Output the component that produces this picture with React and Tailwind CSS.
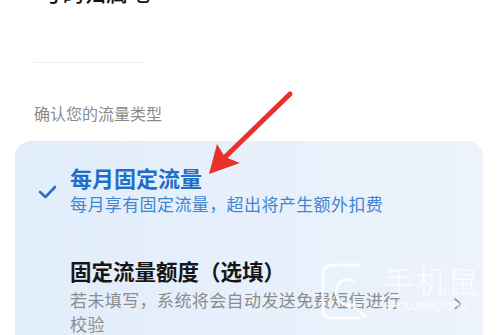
import React from "react";

const CJK = { fontFamily: '"Noto Sans CJK SC", "Noto Sans", sans-serif' };

function Check() {
  return (
    <svg width="19" height="14" viewBox="0 0 19 14" className="shrink-0">
      <path d="M2 7 L7.5 12 L17 2" fill="none" stroke="#2f6fbf" strokeWidth="2.6" strokeLinecap="round" strokeLinejoin="round" />
    </svg>
  );
}

function Arrow() {
  return (
    <svg className="pointer-events-none absolute inset-0" width="503" height="335" viewBox="0 0 503 335">
      <path d="M290 94 L220 162" stroke="#e8312a" strokeWidth="5" strokeLinecap="round" />
      <path d="M209 174 L217 144 L225 157 L240 163 Z" fill="#e8312a" />
    </svg>
  );
}

function Watermark() {
  return (
    <div className="pointer-events-none absolute left-[320px] top-[261px] flex items-start gap-[12px] text-white/80">
      <svg width="52" height="60" viewBox="0 0 52 60">
        <path d="M40 4 H12 Q3 4 3 13 V48 Q3 57 12 57 H40" fill="none" stroke="white" strokeOpacity="0.85" strokeWidth="3" />
        <path d="M34 20 Q22 15 17 26 Q14 36 22 42 Q28 46 36 43" fill="none" stroke="white" strokeOpacity="0.85" strokeWidth="3" />
        <path d="M34 46 L46 56" stroke="white" strokeOpacity="0.85" strokeWidth="3" />
      </svg>
      <div className="flex flex-col">
        <div className="text-[30px] font-light leading-[38px] tracking-[2px]" style={CJK}>手机鼠</div>
        <div className="mt-[2px] text-[10px] leading-[11px]" style={{ fontFamily: '"Liberation Sans", sans-serif' }}>SHOUJISHU.COM</div>
      </div>
    </div>
  );
}

export default function App() {
  return (
    <div className="relative h-[335px] w-[503px] overflow-hidden bg-white" style={CJK}>
      <div className="mt-[-21px] flex items-start justify-between pl-[40px] pr-[62px]">
        <div className="text-[22px] font-medium leading-[24px] text-[#111]">号码归属地</div>
        <div className="mt-[-7px] h-[13px] w-[80px] rounded-md bg-[#ebebeb] blur-[1px]" />
      </div>
      <div className="ml-[33px] mt-[59px] h-[1px] w-[112px] bg-[#eeeeee]" />
      <div className="ml-[34px] mt-[40px] text-[16px] leading-[20px] text-[#8a8a8a]">确认您的流量类型</div>
      <div className="ml-[15px] mr-[20px] mt-[18px] h-[220px] rounded-[16px] bg-gradient-to-r from-[#e2edfb] via-[#e7f0fb] to-[#edf3fb] pt-[22px]">
        <div className="flex items-center">
          <div className="flex w-[55px] justify-end pr-[13px] pt-[6px]">
            <Check />
          </div>
          <div className="flex flex-col">
            <div className="text-[22px] font-bold leading-[28px] text-[#1f6dc7]">每月固定流量</div>
            <div className="mt-[2px] text-[17px] leading-[22px] tracking-[0.4px] text-[#3f86d2]">每月享有固定流量，超出将产生额外扣费</div>
          </div>
        </div>
        <div className="mt-[42px] flex items-center pl-[55px] pr-[20px]">
          <div className="flex flex-1 flex-col">
            <div className="text-[21.5px] font-bold leading-[28px] text-[#161616]">固定流量额度（选填）</div>
            <div className="mt-[3px] text-[17px] leading-[24px] tracking-[0.4px] text-[#8c8c8c]">
              若未填写，系统将会自动发送免费短信进行
              <br />
              校验
            </div>
          </div>
          <svg width="10" height="14" viewBox="0 0 10 14" className="mt-[14px] shrink-0">
            <path d="M2 2 L8 7 L2 12" fill="none" stroke="#9a9a9a" strokeWidth="1.8" strokeLinecap="round" strokeLinejoin="round" />
          </svg>
        </div>
      </div>
      <Arrow />
      <Watermark />
    </div>
  );
}
